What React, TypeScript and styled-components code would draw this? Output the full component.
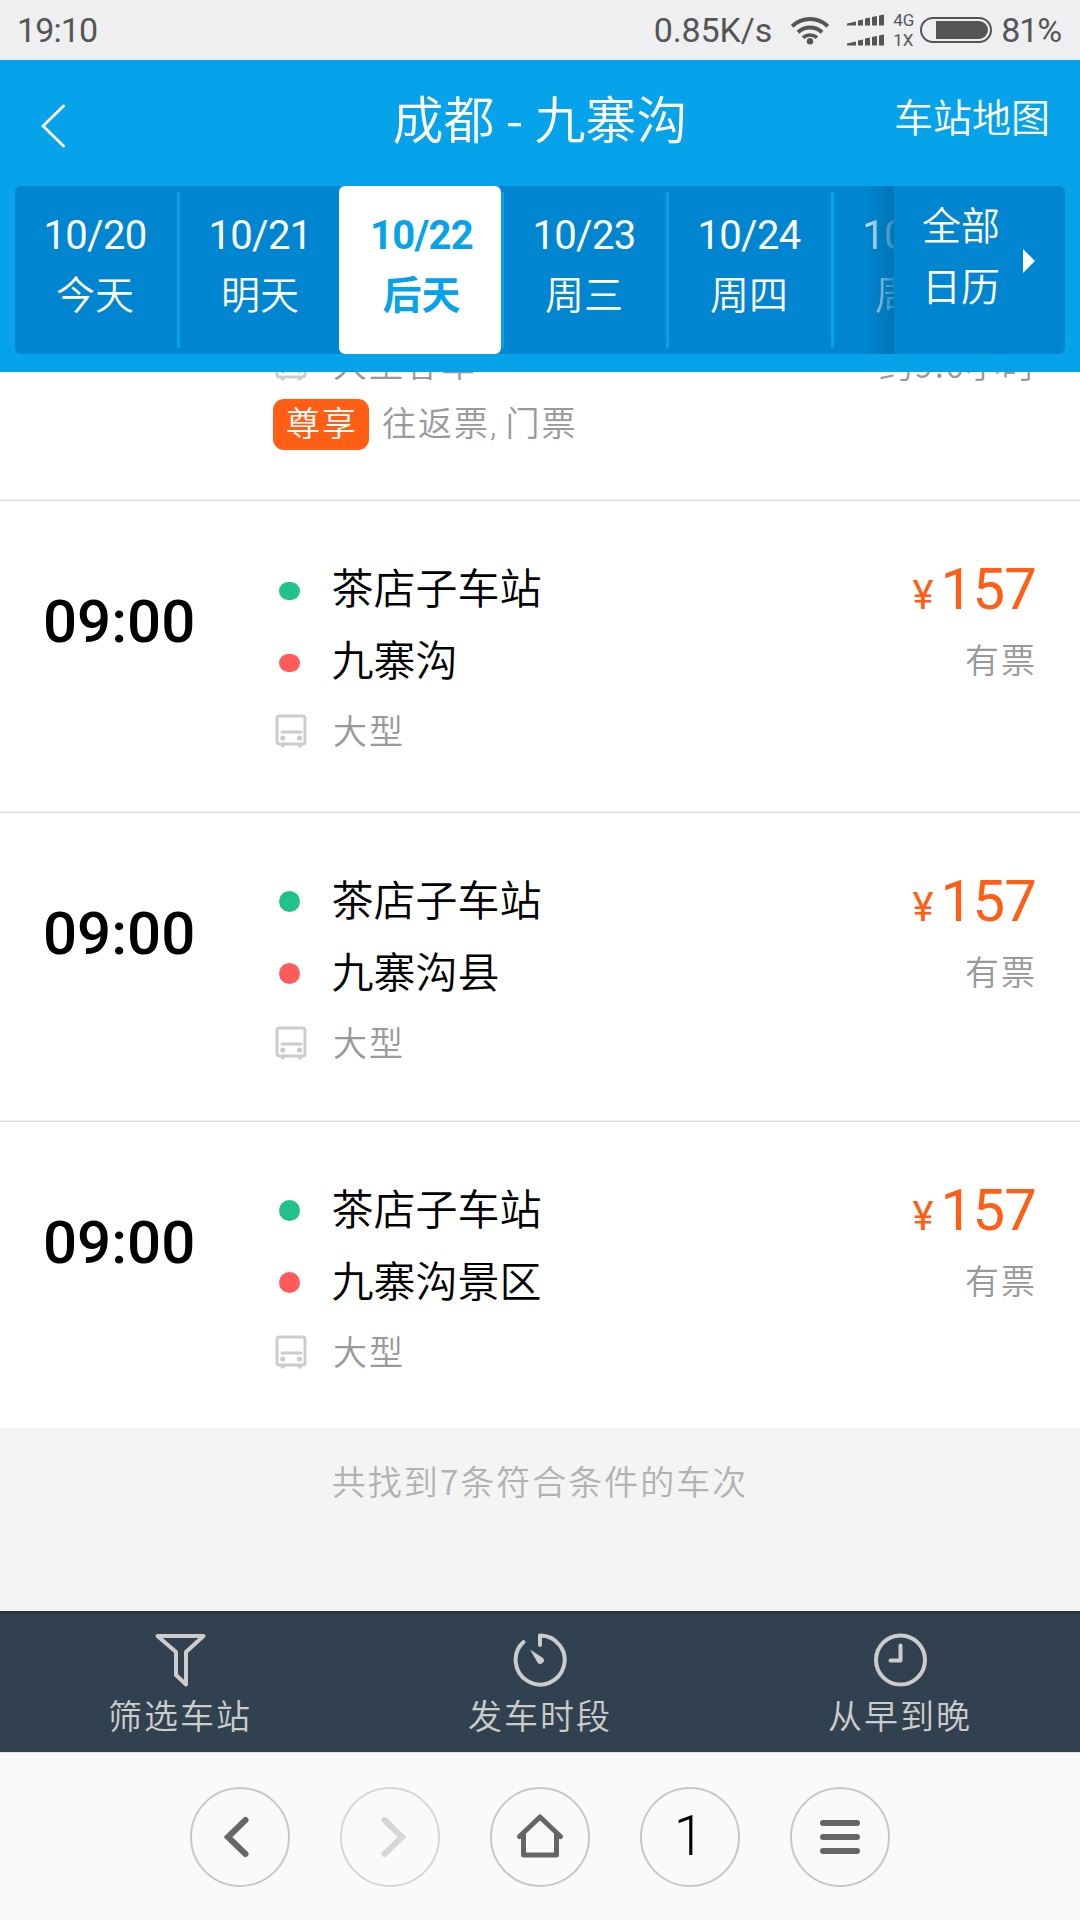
import React from "react";
import styled, { createGlobalStyle, css } from "styled-components";

const CJK = `"Noto Sans CJK SC", sans-serif`;
const LATIN = `Roboto, "Noto Sans CJK SC", sans-serif`;

const Global = createGlobalStyle`
  * { box-sizing: border-box; }
  body { margin: 0; background: #fff; font-family: ${CJK}; font-weight: 350; }
`;

const Screen = styled.div`
  width: 1080px;
  height: 1920px;
  display: flex;
  flex-direction: column;
  overflow: hidden;
  background: #fff;
`;

/* ---------- status bar ---------- */
const StatusBar = styled.div`
  flex: none;
  height: 60px;
  display: flex;
  align-items: center;
  background: #efeff1;
  color: #555;
  padding: 0 19px 0 17px;
  font: 400 34px/60px ${LATIN};
`;
const StatusText = styled.span<{ $spacing?: number; $gap?: number }>`
  letter-spacing: ${(p) => p.$spacing ?? 0}px;
  margin-right: ${(p) => p.$gap ?? 0}px;
  white-space: nowrap;
`;
const Spacer = styled.div`
  flex: 1;
`;
const StatusIcon = styled.div<{ $gap: number }>`
  display: flex;
  margin-right: ${(p) => p.$gap}px;
`;
const NetLabels = styled.div`
  width: 27px;
  display: flex;
  flex-direction: column;
  font: 400 17px/20px ${LATIN};
`;

/* ---------- header ---------- */
const Header = styled.header`
  flex: none;
  height: 312px;
  background: #06a3ea;
  color: #fff;
  padding: 0 15px 18px;
  display: flex;
  flex-direction: column;
`;
const TitleBar = styled.div`
  height: 126px;
  display: grid;
  grid-template-columns: 270px 1fr 270px;
  align-items: center;
`;
const BackButton = styled.div`
  padding: 6px 0 0 26px;
  display: flex;
`;
const Title = styled.h1`
  margin: 0;
  padding-bottom: 12px;
  text-align: center;
  font-size: 51px;
  font-weight: 350;
  line-height: 70px;
  white-space: nowrap;
`;
const MapLink = styled.div`
  text-align: right;
  font-size: 39px;
  line-height: 60px;
  padding: 0 15px 16px 0;
`;
const DateStrip = styled.div`
  height: 168px;
  display: flex;
  border-radius: 6px;
  background: #0086d1;
`;
const Days = styled.div`
  width: 879px;
  display: flex;
  overflow: hidden;
  position: relative;
`;
const EdgeShade = styled.div`
  position: absolute;
  right: 0;
  top: 0;
  width: 30px;
  height: 168px;
  background: linear-gradient(to right, rgba(0, 0, 0, 0), rgba(0, 0, 0, 0.13));
`;
const DayCell = styled.div`
  flex: none;
  display: flex;
  align-items: center;
`;
const DayBody = styled.div<{ $active?: boolean; $faded?: boolean }>`
  width: 162px;
  height: 168px;
  padding: 20px 2px 0 0;
  text-align: center;
  font: 400 40px/60px ${LATIN};
  letter-spacing: -0.7px;
  ${(p) =>
    p.$faded &&
    css`
      mask-image: linear-gradient(to right, #000 24px, rgba(0, 0, 0, 0.2) 60px);
    `}
  ${(p) =>
    p.$active &&
    css`
      background: #fff;
      color: #06a3ea;
      font-weight: 700;
      border-radius: 6px;
      margin-left: -3px;
      padding: 20px 0 0 3px;
      position: relative;
    `}
`;
const DayName = styled.div<{ $active?: boolean }>`
  font: ${(p) => (p.$active ? 700 : 350)} 39px/60px ${CJK};
  letter-spacing: 0;
  margin-top: -4px;
`;
const Separator = styled.div`
  width: 3px;
  height: 156px;
  background: #06a3ea;
`;
const CalendarButton = styled.div`
  flex: 1;
  display: flex;
  padding: 7px 0 0 28px;
  font-size: 39px;
  line-height: 61px;
`;
const CalendarLabel = styled.div`
  width: 78px;
  margin-right: 23px;
`;
const Caret = styled.div`
  margin-top: 56px;
  width: 0;
  height: 0;
  border: 12px solid transparent;
  border-left-color: #fff;
  border-right: 0;
`;

/* ---------- trips ---------- */
const rule = css`
  border-bottom: 1px solid #dcdcdc;
  box-shadow: inset 0 -1px #eee;
`;
const List = styled.main`
  flex: none;
  height: 1056px;
  overflow: hidden;
`;
const PartialTrip = styled.section`
  height: 129px;
  padding: 0 44px 0 273px;
  overflow: hidden;
  ${rule}
`;
const PartialRow = styled.div`
  margin-top: -43px;
  display: flex;
  justify-content: space-between;
`;
const TagRow = styled.div`
  display: flex;
  align-items: center;
  margin-top: -2px;
`;
const Tag = styled.div`
  width: 96px;
  height: 51px;
  border-radius: 11px;
  background: #ff5e14;
  color: #fff;
  padding-left: 13px;
  font-size: 34px;
  line-height: 45px;
  letter-spacing: 2px;
`;
const TagNote = styled.div`
  margin-left: 13px;
  color: #999;
  font-size: 34px;
  line-height: 45px;
  letter-spacing: 2px;
  height: 51px;
  white-space: pre;
`;
const Comma = styled.span`
  font-family: ${LATIN};
  letter-spacing: 0.4px;
`;
const Trip = styled.section<{ $h: number; $last?: boolean }>`
  height: ${(p) => p.$h}px;
  padding: 51px 44px 0 43px;
  display: grid;
  grid-template-columns: 230px 1fr auto;
  align-items: start;
  ${(p) => !p.$last && rule}
`;
const Depart = styled.div`
  font: 500 60px/72px ${LATIN};
  color: #000;
  padding-top: 34px;
`;
const Line = styled.div<{ $muted?: boolean }>`
  display: flex;
  align-items: center;
  height: 72px;
  line-height: 68px;
  font-size: ${(p) => (p.$muted ? 34 : 42)}px;
  letter-spacing: ${(p) => (p.$muted ? 2 : 0)}px;
  color: ${(p) => (p.$muted ? "#999" : "#000")};
`;
const Marker = styled.div<{ $icon?: boolean }>`
  width: ${(p) => (p.$icon ? 60 : 58.5)}px;
  padding-left: ${(p) => (p.$icon ? 2 : 6)}px;
  flex: none;
  display: flex;
`;
const LineText = styled.span`
  height: 72px;
`;
const Dot = styled.div<{ $c: string; $flat?: boolean }>`
  width: 21px;
  height: ${(p) => (p.$flat ? 18 : 21)}px;
  margin-top: ${(p) => (p.$flat ? 5 : 2)}px;
  border-radius: 10.5px;
  background: ${(p) => p.$c};
`;
const Fare = styled.div`
  text-align: right;
`;
const Price = styled.div`
  display: flex;
  align-items: baseline;
  justify-content: flex-end;
  height: 72px;
  color: #ff5e14;
  font: 400 58px/74px ${LATIN};
  letter-spacing: -0.8px;
`;
const Yen = styled.span`
  font-size: 40px;
  margin-right: 8px;
`;
const Stock = styled.div<{ $spacing?: number }>`
  height: 72px;
  line-height: 70px;
  font-size: 34px;
  letter-spacing: ${(p) => p.$spacing ?? 2}px;
  margin-right: -1px;
  color: #999;
`;
const Summary = styled.div`
  flex: none;
  height: 183px;
  background: #f4f4f4;
  color: #b2b2b2;
  text-align: center;
  font-size: 34px;
  letter-spacing: 2px;
  line-height: 50px;
  padding-top: 28px;
`;

/* ---------- bottom bars ---------- */
const FilterBar = styled.nav`
  flex: none;
  height: 141px;
  display: grid;
  grid-template-columns: repeat(3, 1fr);
  background: #324150;
  border-top: 3px solid #263441;
  color: #ccc;
`;
const FilterItem = styled.div`
  display: flex;
  flex-direction: column;
  align-items: center;
  padding-top: 19px;
  font-size: 34px;
  letter-spacing: 2px;
  line-height: 56px;
`;
const BrowserBar = styled.nav`
  flex: none;
  height: 168px;
  background: #fafafa;
  border-top: 1px solid #e3e6e0;
  display: flex;
  justify-content: center;
  gap: 50px;
  padding-top: 34px;
`;
const RoundButton = styled.div<{ $dim?: boolean }>`
  width: 100px;
  height: 100px;
  border-radius: 50%;
  border: 2px solid ${(p) => (p.$dim ? "#d6d6d6" : "#c8c8c8")};
  color: ${(p) => (p.$dim ? "#d6d6d6" : "#666")};
  display: flex;
  align-items: center;
  justify-content: center;
`;
const TabCount = styled.span`
  font: 300 55px/92px ${LATIN};
  color: #000;
  margin: -2px 0 0 -2px;
`;

const BusIcon = () => (
  <svg width="32" height="36" viewBox="0 0 32 36" fill="none" stroke="#ccc">
    <rect x="2" y="2" width="28" height="28" rx="2.5" strokeWidth="3" />
    <path d="M7 18h19" strokeWidth="3" strokeLinecap="round" />
    <circle cx="7.800" cy="24" r="2.600" fill="#ccc" stroke="none" />
    <circle cx="24.500" cy="24" r="2.600" fill="#ccc" stroke="none" />
    <path d="M5 30.500h5.500l-1.500 3h-2.500zM22 30.500h5.500l-1.500 3h-2.500z" fill="#ccc" stroke="none" />
  </svg>
);

const WifiIcon = () => (
  <svg width="40" height="30" viewBox="0 0 40 30" fill="none" stroke="#555" strokeWidth="4">
    <path d="M2.200 11.200a25.500 25.500 0 0 1 35.600 0" />
    <path d="M8 17.200a17.500 17.500 0 0 1 24 0" />
    <path d="M13 22.600a10.500 10.500 0 0 1 14 0" strokeWidth="3.600" />
    <circle cx="20" cy="26.300" r="3.200" fill="#555" stroke="none" />
  </svg>
);

const SignalIcon = () => (
  <svg width="38" height="32" viewBox="0 0 38 32" fill="#555">
    {[0, 20].map((y) => (
      <g key={y} transform={`translate(0 ${y})`}>
        <path d="M0 11.500V9.500L9 7.500V11.500zM11 11.500V6.500L16 5.500V11.500zM18 11.500V4.500L23 3.500V11.500zM25 11.500V3L30 2V11.500zM32 11.500V1.500L37 .5V11.500z" />
      </g>
    ))}
  </svg>
);

const BatteryIcon = () => (
  <svg width="72" height="26" viewBox="0 0 72 26">
    <rect x="1" y="1" width="70" height="24" rx="12" fill="none" stroke="#555" strokeWidth="2" />
    <path d="M16 4h43a9 9 0 0 1 0 18H16z" fill="#555" />
  </svg>
);

const days = [
  { date: "10/20", name: "今天" },
  { date: "10/21", name: "明天", bare: true },
  { date: "10/22", name: "后天", active: true },
  { date: "10/23", name: "周三" },
  { date: "10/24", name: "周四" },
  { date: "10/25", name: "周五", faded: true },
];

const trips = [
  { to: "九寨沟", h: 312, flat: true },
  { to: "九寨沟县", h: 309 },
  { to: "九寨沟景区", h: 306 },
];

export default function App() {
  return (
    <Screen>
      <Global />
      <StatusBar>
        <StatusText $spacing={-0.9}>19:10</StatusText>
        <Spacer />
        <StatusText $spacing={-0.1} $gap={18}>0.85K/s</StatusText>
        <StatusIcon $gap={17}>
          <WifiIcon />
        </StatusIcon>
        <StatusIcon $gap={8}>
          <SignalIcon />
        </StatusIcon>
        <NetLabels>
          <span>4G</span>
          <span>1X</span>
        </NetLabels>
        <StatusIcon $gap={9}>
          <BatteryIcon />
        </StatusIcon>
        <StatusText $spacing={-1.1}>81%</StatusText>
      </StatusBar>

      <Header>
        <TitleBar>
          <BackButton>
            <svg width="26" height="44" viewBox="0 0 26 44" fill="none" stroke="#fff" strokeWidth="2.800" strokeLinecap="round">
              <path d="M22.500 2L2 22L22.500 42" />
            </svg>
          </BackButton>
          <Title>成都 - 九寨沟</Title>
          <MapLink>车站地图</MapLink>
        </TitleBar>
        <DateStrip>
          <Days>
            {days.map((d) => (
              <DayCell key={d.date}>
                <DayBody $active={d.active} $faded={d.faded}>
                  {d.date}
                  <DayName $active={d.active}>{d.name}</DayName>
                </DayBody>
                {!d.bare && <Separator />}
              </DayCell>
            ))}
            <EdgeShade />
          </Days>
          <CalendarButton>
            <CalendarLabel>全部日历</CalendarLabel>
            <Caret />
          </CalendarButton>
        </DateStrip>
      </Header>

      <List>
        <PartialTrip>
          <PartialRow>
            <Line $muted>
              <Marker $icon>
                <BusIcon />
              </Marker>
              <LineText>大型客车</LineText>
            </Line>
            <Stock $spacing={1.6}>约9.0小时</Stock>
          </PartialRow>
          <TagRow>
            <Tag>尊享</Tag>
            <TagNote>
              往返票<Comma>, </Comma>门票
            </TagNote>
          </TagRow>
        </PartialTrip>
        {trips.map((t, i) => (
          <Trip key={t.to} $h={t.h} $last={i === 2}>
            <Depart>09:00</Depart>
            <div>
              <Line>
                <Marker>
                  <Dot $c="#20c28a" $flat={t.flat} />
                </Marker>
                <LineText>茶店子车站</LineText>
              </Line>
              <Line>
                <Marker>
                  <Dot $c="#ff5b5b" $flat={t.flat} />
                </Marker>
                <LineText>{t.to}</LineText>
              </Line>
              <Line $muted>
                <Marker $icon>
                  <BusIcon />
                </Marker>
                <LineText>大型</LineText>
              </Line>
            </div>
            <Fare>
              <Price>
                <Yen>¥</Yen>157
              </Price>
              <Stock>有票</Stock>
            </Fare>
          </Trip>
        ))}
      </List>
      <Summary>共找到7条符合条件的车次</Summary>

      <FilterBar>
        <FilterItem>
          <svg width="54" height="54" viewBox="0 0 54 54" fill="none" stroke="#ccc" strokeWidth="4" strokeLinejoin="round">
            <path d="M4.500 3H50.500L33 19V51.500L23 42V19z" />
          </svg>
          <span>筛选车站</span>
        </FilterItem>
        <FilterItem>
          <svg width="54" height="54" viewBox="0 0 54 54" fill="none" stroke="#ccc" strokeWidth="4" strokeLinejoin="round" strokeLinecap="round">
            <path d="M27 12V2.500A24.500 24.500 0 1 1 10.500 9" />
            <path d="M17 16.500L30 25A3.500 3.500 0 0 1 24.500 29.500z" fill="#ccc" stroke="none" />
          </svg>
          <span>发车时段</span>
        </FilterItem>
        <FilterItem>
          <svg width="54" height="54" viewBox="0 0 54 54" fill="none" stroke="#ccc" strokeWidth="4" strokeLinejoin="round" strokeLinecap="round">
            <circle cx="27.500" cy="27" r="24.500" />
            <path d="M27.500 12.500V27.500H17.500" />
          </svg>
          <span>从早到晚</span>
        </FilterItem>
      </FilterBar>

      <BrowserBar>
        <RoundButton>
          <svg width="40" height="44" viewBox="0 0 40 44" fill="none" stroke="currentColor" strokeWidth="6" strokeLinecap="round">
            <path d="M25.500 5L8 22L25.500 39" />
          </svg>
        </RoundButton>
        <RoundButton $dim>
          <svg width="40" height="44" viewBox="0 0 40 44" fill="none" stroke="currentColor" strokeWidth="6" strokeLinecap="round">
            <path d="M14.500 5L32 22L14.500 39" />
          </svg>
        </RoundButton>
        <RoundButton>
          <svg width="48" height="46" viewBox="0 0 48 46" fill="none" stroke="currentColor" strokeWidth="5" strokeLinecap="round" strokeLinejoin="round">
            <path d="M3.500 22.500L24 3L44.500 22.500" />
            <path d="M7.500 21V41H40.500V21" />
          </svg>
        </RoundButton>
        <RoundButton>
          <TabCount>1</TabCount>
        </RoundButton>
        <RoundButton>
          <svg width="40" height="34" viewBox="0 0 40 34" fill="none" stroke="currentColor" strokeWidth="6" strokeLinecap="round">
            <path d="M3 3H37M3 17H37M3 31H37" />
          </svg>
        </RoundButton>
      </BrowserBar>
    </Screen>
  );
}
